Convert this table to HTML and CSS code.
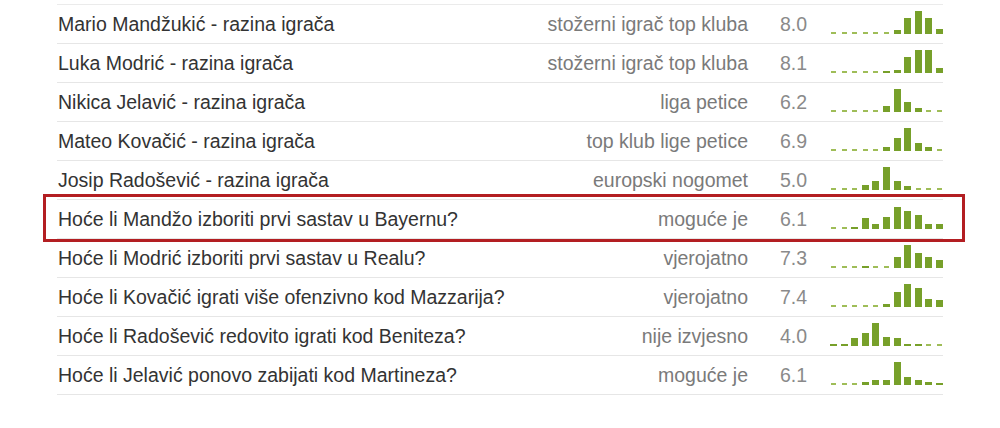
FILE: index.html
```html
<!DOCTYPE html>
<html lang="hr">
<head>
<meta charset="utf-8">
<title>Ocjene</title>
<link rel="stylesheet" href="styles.css">
</head>
<body>
<div class="page">
  <ul class="list">
    <li class="row">
      <span class="name">Mario Mandžukić - razina igrača</span>
      <span class="cat">stožerni igrač top kluba</span>
      <span class="score">8.0</span>
      <span class="hist"><i style="height:0"></i><i style="height:0"></i><i style="height:0"></i><i style="height:0"></i><i style="height:0"></i><i style="height:0"></i><i style="height:4px"></i><i style="height:16px"></i><i style="height:23px"></i><i style="height:16px"></i><i style="height:5px"></i></span>
    </li>
    <li class="row">
      <span class="name">Luka Modrić - razina igrača</span>
      <span class="cat">stožerni igrač top kluba</span>
      <span class="score">8.1</span>
      <span class="hist"><i style="height:0"></i><i style="height:0"></i><i style="height:0"></i><i style="height:0"></i><i style="height:0"></i><i style="height:2px"></i><i style="height:3px"></i><i style="height:16px"></i><i style="height:23px"></i><i style="height:23px"></i><i style="height:5px"></i></span>
    </li>
    <li class="row">
      <span class="name">Nikica Jelavić - razina igrača</span>
      <span class="cat">liga petice</span>
      <span class="score">6.2</span>
      <span class="hist"><i style="height:0"></i><i style="height:0"></i><i style="height:0"></i><i style="height:0"></i><i style="height:0"></i><i style="height:6px"></i><i style="height:23px"></i><i style="height:10px"></i><i style="height:4px"></i><i style="height:0"></i><i style="height:0"></i></span>
    </li>
    <li class="row">
      <span class="name">Mateo Kovačić - razina igrača</span>
      <span class="cat">top klub lige petice</span>
      <span class="score">6.9</span>
      <span class="hist"><i style="height:0"></i><i style="height:0"></i><i style="height:0"></i><i style="height:0"></i><i style="height:0"></i><i style="height:4px"></i><i style="height:13px"></i><i style="height:23px"></i><i style="height:8px"></i><i style="height:4px"></i><i style="height:0"></i></span>
    </li>
    <li class="row">
      <span class="name">Josip Radošević - razina igrača</span>
      <span class="cat">europski nogomet</span>
      <span class="score">5.0</span>
      <span class="hist"><i style="height:0"></i><i style="height:0"></i><i style="height:0"></i><i style="height:5px"></i><i style="height:9px"></i><i style="height:23px"></i><i style="height:9px"></i><i style="height:4px"></i><i style="height:0"></i><i style="height:0"></i><i style="height:0"></i></span>
    </li>
    <li class="row row-marked">
      <span class="name">Hoće li Mandžo izboriti prvi sastav u Bayernu?</span>
      <span class="cat">moguće je</span>
      <span class="score">6.1</span>
      <span class="hist"><i style="height:0"></i><i style="height:0"></i><i style="height:2px"></i><i style="height:11px"></i><i style="height:5px"></i><i style="height:12px"></i><i style="height:22px"></i><i style="height:18px"></i><i style="height:14px"></i><i style="height:5px"></i><i style="height:5px"></i></span>
      <span class="marker"></span>
    </li>
    <li class="row">
      <span class="name">Hoće li Modrić izboriti prvi sastav u Realu?</span>
      <span class="cat">vjerojatno</span>
      <span class="score">7.3</span>
      <span class="hist"><i style="height:0"></i><i style="height:0"></i><i style="height:0"></i><i style="height:2px"></i><i style="height:0"></i><i style="height:0"></i><i style="height:11px"></i><i style="height:23px"></i><i style="height:15px"></i><i style="height:11px"></i><i style="height:8px"></i></span>
    </li>
    <li class="row">
      <span class="name">Hoće li Kovačić igrati više ofenzivno kod Mazzarija?</span>
      <span class="cat">vjerojatno</span>
      <span class="score">7.4</span>
      <span class="hist"><i style="height:0"></i><i style="height:0"></i><i style="height:0"></i><i style="height:0"></i><i style="height:0"></i><i style="height:3px"></i><i style="height:15px"></i><i style="height:23px"></i><i style="height:19px"></i><i style="height:8px"></i><i style="height:7px"></i></span>
    </li>
    <li class="row">
      <span class="name">Hoće li Radošević redovito igrati kod Beniteza?</span>
      <span class="cat">nije izvjesno</span>
      <span class="score">4.0</span>
      <span class="hist"><i style="height:2px"></i><i style="height:2px"></i><i style="height:8px"></i><i style="height:13px"></i><i style="height:23px"></i><i style="height:9px"></i><i style="height:8px"></i><i style="height:2px"></i><i style="height:2px"></i><i style="height:0"></i><i style="height:0"></i></span>
    </li>
    <li class="row">
      <span class="name">Hoće li Jelavić ponovo zabijati kod Martineza?</span>
      <span class="cat">moguće je</span>
      <span class="score">6.1</span>
      <span class="hist"><i style="height:0"></i><i style="height:0"></i><i style="height:0"></i><i style="height:3px"></i><i style="height:5px"></i><i style="height:5px"></i><i style="height:23px"></i><i style="height:8px"></i><i style="height:5px"></i><i style="height:3px"></i><i style="height:2px"></i></span>
    </li>
  </ul>
</div>
</body>
</html>
```

FILE: styles.css
```css
* { box-sizing: border-box; }

html, body {
  margin: 0;
  padding: 0;
  background: #ffffff;
}

body {
  font-family: "Liberation Sans", Arial, sans-serif;
  font-size: 19.5px;
  color: #333333;
  width: 1000px;
  height: 428px;
  overflow: hidden;
}

.page {
  padding: 4px 0 0 57px;
}

.list {
  list-style: none;
  margin: 0;
  padding: 0;
  width: 886px;
  border-top: 1px solid #ebebeb;
}

.row {
  position: relative;
  display: grid;
  grid-template-columns: 1fr auto 82px 113px;
  align-items: center;
  height: 39px;
  border-bottom: 1px solid #e6e6e6;
}

.name {
  padding-left: 1px;
  color: #333333;
  white-space: nowrap;
}

.cat {
  text-align: right;
  color: #7a7a7a;
  white-space: nowrap;
}

.score {
  padding-left: 32px;
  color: #8a8a8a;
}

.hist {
  align-self: end;
  margin-bottom: 9px;
  height: 24px;
  display: flex;
  align-items: flex-end;
  justify-content: space-between;
}

.hist i {
  display: block;
  width: 7px;
  min-height: 2px;
  background: #77a02a;
}

.hist i[style="height:0"] {
  width: 5px;
  margin: 0 1px;
  background: #9fbd58;
}

.marker {
  position: absolute;
  left: -14px;
  right: -22px;
  top: -6px;
  bottom: -4px;
  border: 3px solid #b31e22;
  pointer-events: none;
}
```
